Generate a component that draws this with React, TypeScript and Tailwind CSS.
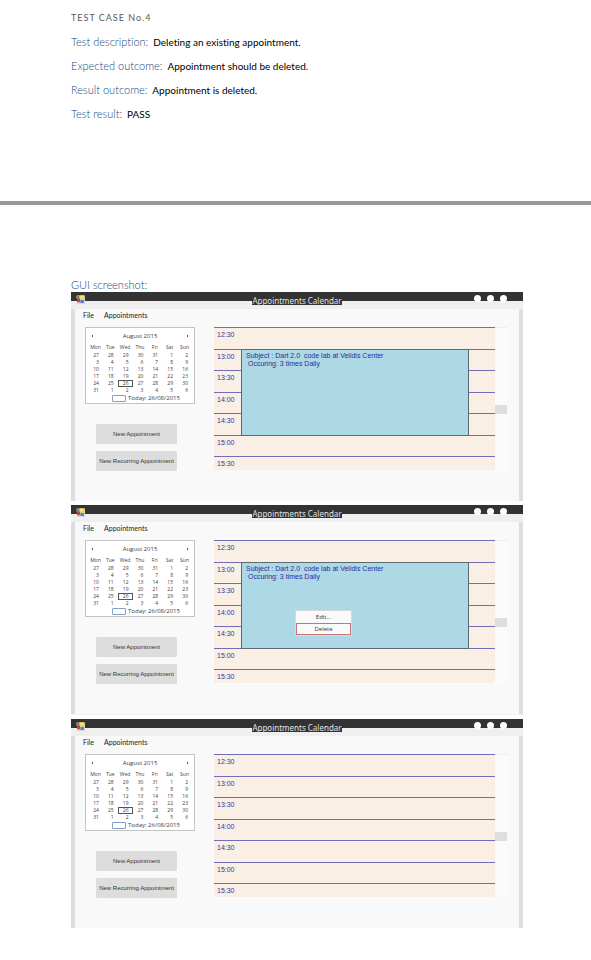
import React from "react";

const DAYS = ["Mon", "Tue", "Wed", "Thu", "Fri", "Sat", "Sun"];

const WEEKS = [
  [27, 28, 29, 30, 31, 1, 2],
  [3, 4, 5, 6, 7, 8, 9],
  [10, 11, 12, 13, 14, 15, 16],
  [17, 18, 19, 20, 21, 22, 23],
  [24, 25, 26, 27, 28, 29, 30],
  [31, 1, 2, 3, 4, 5, 6],
];

const TIMES = ["12:30", "13:00", "13:30", "14:00", "14:30", "15:00", "15:30"];

function AppIcon() {
  return (
    <svg viewBox="0 0 9 9" className="h-[9px] w-[9px]" aria-hidden="true">
      <rect x="1" y="0.5" width="8" height="8.2" fill="#cfcfcf" />
      <rect x="0" y="0.5" width="3.4" height="3" fill="#8f7a62" />
      <rect x="3.6" y="0.2" width="4.6" height="4.6" fill="#f2cf4a" />
      <rect x="4.4" y="1" width="2.6" height="2.4" fill="#fbe58a" />
      <rect x="1" y="3.4" width="3" height="3.8" fill="#c2453c" />
      <rect x="4.4" y="5" width="3.4" height="3" fill="#4f7fd0" />
    </svg>
  );
}

function TitleBar() {
  return (
    <header className="grid h-[17px] grid-cols-3 bg-[linear-gradient(#333333_0_9px,#efefef_9px)]">
      <div className="pt-[3px] pl-[5px]">
        <AppIcon />
      </div>
      <h2 className="mt-1 h-[9px] justify-self-center bg-[#333333] font-['Noto_Sans','Open_Sans',sans-serif] text-[8px] leading-[9px] whitespace-nowrap text-[#e2e2e2]">
        Appointments Calendar
      </h2>
      <div className="flex justify-end gap-[6px] pt-[3px] pr-4">
        <button aria-label="Minimize" className="h-[7px] w-[7px] rounded-full bg-white" />
        <button aria-label="Maximize" className="h-[7px] w-[7px] rounded-full bg-white" />
        <button aria-label="Close" className="h-[7px] w-[7px] rounded-full bg-white" />
      </div>
    </header>
  );
}

function MonthCalendar() {
  return (
    <section className="h-[77px] w-[110px] border border-[#c4c4c4] bg-white px-[2px] font-['Open_Sans','Noto_Sans',sans-serif] text-[5px] leading-[7px] text-[#404040]">
      <div className="flex h-4 items-center justify-between px-[3px]">
        <button aria-label="Previous month">
          <svg viewBox="0 0 3 4" className="h-1 w-[3px]" aria-hidden="true">
            <path d="M2 0.6 0.8 2l1.2 1.4z" fill="#333" />
          </svg>
        </button>
        <span className="text-[6px]">August 2015</span>
        <button aria-label="Next month">
          <svg viewBox="0 0 3 4" className="h-1 w-[3px]" aria-hidden="true">
            <path d="M1 0.6 2.2 2 1 3.4z" fill="#333" />
          </svg>
        </button>
      </div>
      <table className="w-full table-fixed border-collapse">
        <thead>
          <tr>
            {DAYS.map((day) => (
              <th key={day} className="h-2 p-0 text-center align-top font-normal">
                {day}
              </th>
            ))}
          </tr>
        </thead>
        <tbody>
          {WEEKS.map((week, w) => (
            <tr key={w}>
              {week.map((day, d) => (
                <td
                  key={d}
                  className={
                    w === 4 && d === 2
                      ? "h-[7px] p-0 pr-1 text-right outline outline-[#555555] -outline-offset-1"
                      : "h-[7px] p-0 pr-1 text-right"
                  }
                >
                  {day}
                </td>
              ))}
            </tr>
          ))}
        </tbody>
      </table>
      <div className="flex h-2 items-center justify-center gap-[2px] pl-3 text-[6px]">
        <span className="h-[7px] w-[14px] rounded-[1px] border border-[#7f9fc9] bg-white" />
        <span>Today: 26/08/2015</span>
      </div>
    </section>
  );
}

function Schedule({ event, menu }: { event: boolean; menu: boolean }) {
  return (
    <section className="flex h-[143px] flex-1">
      <div className="relative grid flex-1 grid-rows-[repeat(6,1fr)_14px] bg-[#faefe5]">
        {TIMES.map((time) => (
          <div
            key={time}
            className="overflow-hidden border-t border-[#736db8] pt-[2px] pl-[3px] text-[7px] leading-[9px] text-[#41329b]"
          >
            {time}
          </div>
        ))}
        {event && (
          <article className="absolute top-[22px] right-[26px] left-[27px] h-[87px] border border-[#5c6b70] bg-[#add8e6] pt-[2px] pl-1 text-[7px] leading-[8px] whitespace-pre text-[#2d2a9c]">
            <p>{"Subject : Dart 2.0  code lab at Velidis Center"}</p>
            <p>{" Occuring: 3 times Daily"}</p>
            {menu && (
              <div className="absolute top-[47px] left-[53px] flex w-[57px] flex-col border border-[#d4dadc] bg-[#fafafa] font-['Open_Sans','Noto_Sans',sans-serif] text-[6px] text-[#333333]">
                <button className="h-3">Edit...</button>
                <button className="h-3 border border-[#c9747d]">Delete</button>
              </div>
            )}
          </article>
        )}
      </div>
      <div className="flex w-3 flex-col border-t border-[#eeeeee] bg-[#fbfbfb] pt-[77px]">
        <div className="h-[9px] bg-[#dedede]" />
      </div>
    </section>
  );
}

function AppWindow({ event = false, menu = false }: { event?: boolean; menu?: boolean }) {
  return (
    <div
      className={
        menu
          ? "border-b border-[#f1f1f1] bg-[#f9f9f9] font-['Liberation_Sans',Arial,sans-serif]"
          : "bg-[#f9f9f9] font-['Liberation_Sans',Arial,sans-serif]"
      }
    >
      <TitleBar />
      <div className="h-48 border-x-4 border-[#dedede]">
        <nav className="flex h-[18px] gap-[10px] pt-[2px] pl-2 font-[Lato,Carlito,sans-serif] text-[7px] leading-[9px] text-[#222222]">
          <button className="h-[9px]">File</button>
          <button className="h-[9px]">Appointments</button>
        </nav>
        <div className="flex pr-3 pl-[10px]">
          <div className="w-[129px] shrink-0">
            <MonthCalendar />
            <div className="mt-5 ml-[11px] flex w-[81px] flex-col gap-[7px] text-[6px] whitespace-nowrap text-[#333333]">
              <button className="h-5 rounded-[1px] bg-[#dddddd]">New Appointment</button>
              <button className="h-5 rounded-[1px] bg-[#dddddd]">New Recurring Appointment</button>
            </div>
          </div>
          <Schedule event={event} menu={menu} />
        </div>
      </div>
    </div>
  );
}

function Field({ label, value }: { label: string; value: string }) {
  return (
    <p className="h-6 text-[11px] leading-6 font-light text-[#174a7c]">
      {label}{" "}
      <span className="ml-[2px] text-[10px] leading-none font-normal text-black">{value}</span>
    </p>
  );
}

export default function App() {
  return (
    <main className="bg-white pb-8 font-[Lato,Carlito,sans-serif] [font-variant-ligatures:none]">
      <section className="h-[201px] pt-[6px] pr-[68px] pl-[71px]">
        <h1 className="h-6 text-[9px] leading-6 tracking-[1px] text-[#595959]">TEST CASE No.4</h1>
        <Field label="Test description:" value="Deleting an existing appointment." />
        <Field label="Expected outcome:" value="Appointment should be deleted." />
        <Field label="Result outcome:" value="Appointment is deleted." />
        <Field label="Test result:" value="PASS" />
      </section>
      <hr className="h-1 border-0 bg-[#999999]" />
      <section className="pt-[72px] pr-[68px] pl-[71px]">
        <h2 className="text-[11px] leading-[15px] font-light text-[#174a7c]">GUI screenshot:</h2>
        <div className="flex flex-col gap-1">
          <AppWindow event />
          <AppWindow event menu />
          <AppWindow />
        </div>
      </section>
    </main>
  );
}
